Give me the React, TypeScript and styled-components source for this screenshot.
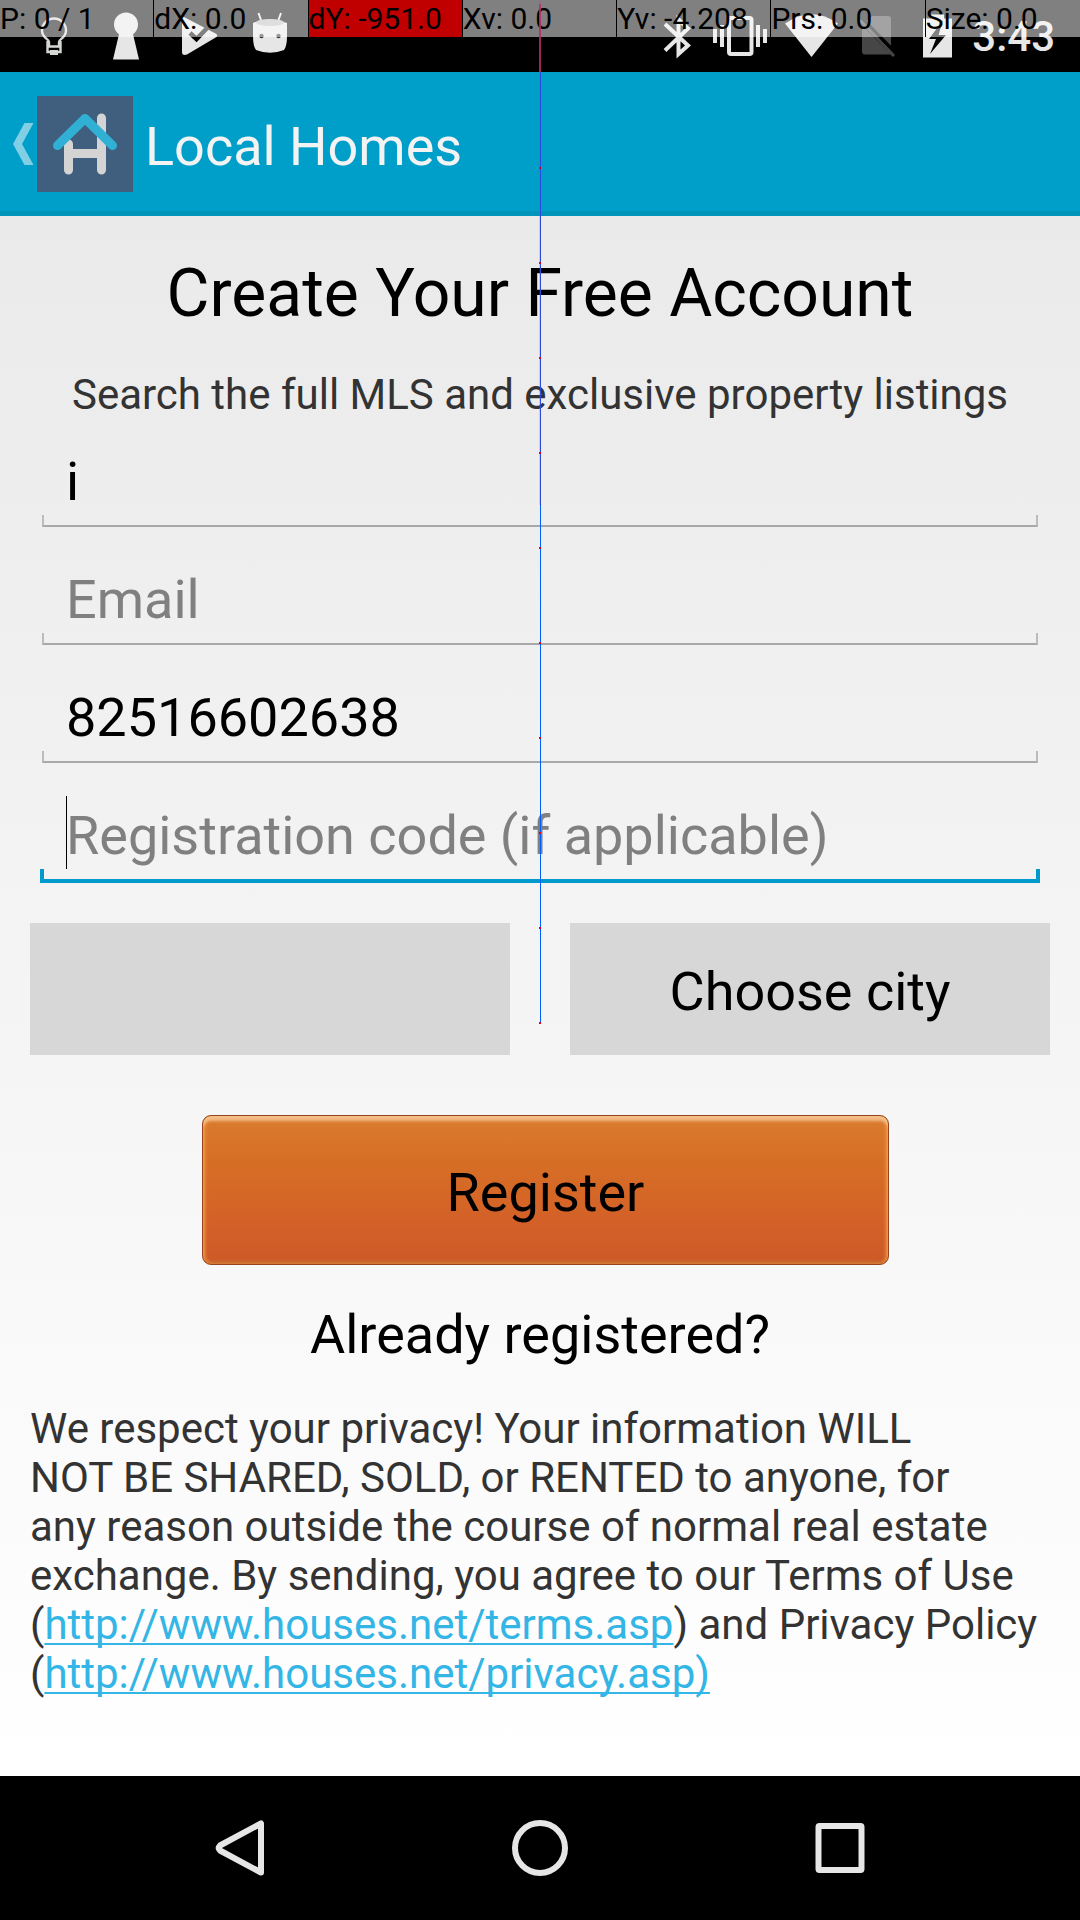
import React from "react";
import styled, { createGlobalStyle } from "styled-components";

const GlobalStyle = createGlobalStyle`
  *, *::before, *::after { box-sizing: border-box; }
  body {
    margin: 0;
    background: #000;
    font-family: Roboto, "Liberation Sans", sans-serif;
  }
  button, input { font-family: inherit; }
`;

const Screen = styled.div`
  position: relative;
  display: flex;
  flex-direction: column;
  min-height: 100vh;
  overflow-x: hidden;
`;

const StatusBar = styled.header`
  display: flex;
  justify-content: space-between;
  height: 72px;
  padding: 0 25px 0 18px;
  background: #000;
  color: #e6e6e6;
`;

const StatusGroup = styled.div`
  display: flex;
  align-items: center;
`;

const StatusIcon = styled.svg<{ $width: number }>`
  display: block;
  flex: none;
  width: ${(p) => p.$width}px;
  height: 72px;
`;

const Clock = styled.time`
  font-size: 42px;
  font-weight: 500;
  line-height: 50px;
  padding-top: 2px;
  margin-left: 4px;
`;

const PointerReadout = styled.div`
  position: absolute;
  top: 0;
  left: 0;
  right: 0;
  display: grid;
  grid-template-columns: repeat(7, 1fr);
  height: 37px;
`;

const ReadoutCell = styled.span<{ $alert?: boolean }>`
  border-right: 1px solid #000;
  background: ${(p) => (p.$alert ? "#c00000" : "rgba(255, 255, 255, 0.5)")};
  background-clip: padding-box;
  color: #000;
  font-size: 30px;
  line-height: 37px;
  white-space: nowrap;

  &:last-child {
    border-right: 0;
  }
`;

const PointerTrace = styled.svg`
  position: absolute;
  top: 0;
  left: 50%;
  width: 4px;
  height: 1024px;
  margin-left: -2px;
  pointer-events: none;
`;

const ActionBar = styled.div`
  display: flex;
  align-items: center;
  height: 144px;
  background: #009fc9;
  box-shadow: inset 0 -5px 0 #0094bb;
`;

const UpButton = styled.button`
  display: flex;
  align-items: center;
  padding: 0;
  border: 0;
  background: none;
`;

const AppTitle = styled.span`
  padding: 5px 0 0 12px;
  color: #f3f3f3;
  font-size: 54px;
  line-height: 64px;
`;

const Content = styled.main`
  flex: 1;
  display: flex;
  flex-direction: column;
  gap: 38px;
  padding: 39px 30px 76px;
  background: linear-gradient(#eaeaea, #ffffff);
`;

const Heading = styled.h1`
  margin: 0;
  font-size: 66px;
  font-weight: 400;
  line-height: 77px;
  text-align: center;
`;

const Subheading = styled.p`
  margin: 0;
  color: #333;
  font-size: 42px;
  line-height: 49px;
  text-align: center;
`;

const Form = styled.form`
  display: flex;
  flex-direction: column;
`;

const Fields = styled.div`
  margin-top: -38px;
  padding: 0 12px;
`;

const Field = styled.label`
  position: relative;
  display: block;
  height: 118px;
  padding: 31px 24px 0;
`;

/* bracket-shaped line under a text box */
const Underline = styled.span<{ $active?: boolean }>`
  position: absolute;
  left: ${(p) => (p.$active ? -2 : 0)}px;
  right: ${(p) => (p.$active ? -2 : 0)}px;
  bottom: ${(p) => (p.$active ? 8 : 10)}px;
  height: ${(p) => (p.$active ? 14 : 12)}px;
  border: solid ${(p) => (p.$active ? "#0099cc" : "#bcbcbc")};
  border-width: ${(p) => (p.$active ? "0 4px 4px" : "0 2px 2px")};
  border-bottom-color: ${(p) => (p.$active ? "#0099cc" : "#a8a8a8")};
  pointer-events: none;
`;

const TextInput = styled.input`
  display: block;
  width: 100%;
  height: 64px;
  padding: 0;
  border: 0;
  outline: 0;
  background: none;
  color: #000;
  font-size: 54px;
  line-height: 64px;

  &::placeholder {
    color: #808080;
    opacity: 1;
  }
`;

const Caret = styled.i`
  position: absolute;
  top: 23px;
  left: 24px;
  width: 1px;
  height: 73px;
  background: #000;
`;

const Choices = styled.div`
  display: grid;
  grid-template-columns: 1fr 1fr;
  gap: 60px;
  margin-top: 32px;
`;

const ChoiceButton = styled.button`
  height: 132px;
  padding: 5px 0 0;
  border: 0;
  background: #d7d7d7;
  color: #000;
  font-size: 54px;
`;

const RegisterButton = styled.button`
  height: 150px;
  margin: 60px 161px 0 172px;
  padding: 5px 0 0;
  border: 1px solid #98431f;
  border-radius: 9px;
  background: linear-gradient(#da7c30, #d66f25 30%, #d46128 70%, #cd5927);
  box-shadow:
    inset 0 5px 3px rgba(255, 222, 180, 0.65),
    inset 3px 0 3px rgba(240, 150, 55, 0.6),
    inset -3px 0 3px rgba(240, 150, 55, 0.6),
    inset 0 -3px 3px rgba(190, 120, 60, 0.6);
  color: #000;
  font-size: 54px;
`;

const SignInLink = styled.a`
  align-self: center;
  color: #000;
  font-size: 54px;
  line-height: 63px;
  text-decoration: none;
`;

const Privacy = styled.p`
  margin: 0;
  color: #333;
  font-size: 42px;
  line-height: 49px;

  a {
    color: #33b5e5;
    text-decoration-thickness: 2px;
    text-underline-offset: 4px;
    text-decoration-skip-ink: none;
  }
`;

const NavBar = styled.nav`
  display: grid;
  grid-template-columns: repeat(3, 300px);
  justify-content: center;
  height: 144px;
  background: #000;
`;

const NavButton = styled.button`
  display: grid;
  place-items: center;
  padding: 0;
  border: 0;
  background: none;
`;

const READOUTS = [
  { text: "P: 0 / 1" },
  { text: "dX: 0.0" },
  { text: "dY: -951.0", alert: true },
  { text: "Xv: 0.0" },
  { text: "Yv: -4.208" },
  { text: "Prs: 0.0" },
  { text: "Size: 0.0" },
];

const TRACE_POINTS = [168, 263, 358, 453, 548, 643, 738, 833, 928, 1023];

const FIELDS = [
  { label: "Name", value: "i" },
  { label: "Email", value: "" },
  { label: "Phone", value: "82516602638" },
  { label: "Registration code (if applicable)", value: "", active: true },
];

function NotificationIcons() {
  return (
    <StatusGroup>
      <StatusIcon $width={72} viewBox="0 0 72 72">
        <path
          d="M31 47 V42 C31 39 24 38 24 30.500 A12 12 0 0 1 48 30.500 C48 38 41 39 41 42 V47"
          fill="none"
          stroke="#d4d8d4"
          strokeWidth="2.400"
        />
        <path d="M29.500 41 V52 H42.500 V41 M30 46.500 H42" fill="none" stroke="#d4d8d4" strokeWidth="2.400" />
        <path d="M32 50 H40 V55 H32 Z" fill="#d4d8d4" />
      </StatusIcon>
      <StatusIcon $width={72} viewBox="0 0 72 72">
        <circle cx="36" cy="24.500" r="12" fill="#e6e6e6" />
        <path d="M29.500 32 H42.500 L49 59.500 H23 Z" fill="#e6e6e6" />
      </StatusIcon>
      <StatusIcon $width={72} viewBox="0 0 72 72">
        <path
          d="M21 16.500 L54.500 34 Q56 35.500 54.500 37 L25 54.500 Q20 56 20 52 V18 Q20 16.500 21 16.500 Z"
          fill="#e6e6e6"
        />
        <path d="M28 33 L34.500 39 L49 24" fill="none" stroke="#000" strokeWidth="4.500" />
      </StatusIcon>
      <StatusIcon $width={72} viewBox="0 0 72 72">
        <path d="M27 20 L24.500 13 M44.500 20 L47 13" stroke="#e6e6e6" strokeWidth="2" />
        <path d="M19 23 Q36 16 53 23 V36 Q53 46 50 50 Q36 55.500 22 50 Q19 46 19 36 Z" fill="#e6e6e6" />
        <ellipse cx="36" cy="22.500" rx="14" ry="3.500" fill="#bdbdbd" />
        <circle cx="27.500" cy="36" r="2.200" fill="#333" />
        <circle cx="44.500" cy="36" r="2.200" fill="#333" />
      </StatusIcon>
    </StatusGroup>
  );
}

function SystemIcons() {
  return (
    <StatusGroup>
      <StatusIcon $width={62} viewBox="646 0 62 72">
        <path
          d="M665 24 L688 45.500 L678.500 54 V19.500 L688 28.500 L665 50.500"
          fill="none"
          stroke="#e6e6e6"
          strokeWidth="4"
        />
      </StatusIcon>
      <StatusIcon $width={68} viewBox="708 0 68 72">
        <rect x="729" y="18" width="22.500" height="36" rx="2" fill="none" stroke="#e6e6e6" strokeWidth="4" />
        <path
          d="M715 29 V43 M722 25 V47 M758 25 V47 M765 29 V43"
          stroke="#e6e6e6"
          strokeWidth="4"
        />
      </StatusIcon>
      <StatusIcon $width={72} viewBox="776 0 72 72">
        <path d="M811.500 57 L785 23.500 Q811.500 5 838 23.500 Z" fill="#e6e6e6" />
      </StatusIcon>
      <StatusIcon $width={60} viewBox="848 0 60 72">
        <path d="M872 16 H888 Q891 16 891 19 V49 L865 23 Z" fill="#464646" />
        <path d="M862 25 L891 54.500 H865 Q862 54.500 862 51.500 Z" fill="#464646" />
        <path d="M860 20 L894 56" stroke="#464646" strokeWidth="3" />
        <path d="M862 18 L895 52" stroke="#000" strokeWidth="3" />
      </StatusIcon>
      <StatusIcon $width={60} viewBox="908 0 60 72">
        <path d="M923 18.500 H931 V14.500 H944 V18.500 H952 V57.500 H923 Z" fill="#e6e6e6" />
        <path d="M943 20 L929 39 H936 L930 54 L946 35 H938.500 Z" fill="#000" />
      </StatusIcon>
      <Clock>3:43</Clock>
    </StatusGroup>
  );
}

function Trace() {
  return (
    <PointerTrace viewBox="0 0 4 1024" shapeRendering="crispEdges" aria-hidden="true">
      <rect x="1" y="0" width="2" height="505" fill="#c832a0" opacity="0.22" />
      <rect x="2" y="72" width="1" height="433" fill="#2c49dc" />
      <rect x="2" y="505" width="1" height="518" fill="#005eff" />
      <rect x="1" y="4" width="2" height="68" fill="#b62c66" opacity="0.8" />
      {TRACE_POINTS.map((y) => (
        <rect key={y} x="1" y={y - 1} width="2" height="2" fill="#e00020" />
      ))}
    </PointerTrace>
  );
}

export default function App() {
  return (
    <>
      <GlobalStyle />
      <Screen>
        <StatusBar>
          <NotificationIcons />
          <SystemIcons />
        </StatusBar>

        <ActionBar>
          <UpButton type="button" aria-label="Navigate up">
            <svg width="37" height="96" viewBox="0 0 37 96">
              <path d="M24.500 27 H33.500 L22 48 L33.500 69 H24.500 L13 48 Z" fill="#80cfe4" />
            </svg>
            <svg width="96" height="96" viewBox="0 0 96 96">
              <rect width="96" height="96" fill="#405e7d" />
              <g fill="none" strokeWidth="9" strokeLinecap="round">
                <path d="M31.500 48 V74 M64.500 22 V74 M31.500 57.500 H64.500" stroke="#d4d4d4" />
                <path d="M20.500 49.500 L48 22.500 L75.500 49.500" stroke="#30b0d4" strokeLinejoin="round" />
              </g>
            </svg>
          </UpButton>
          <AppTitle>Local Homes</AppTitle>
        </ActionBar>

        <Content>
          <Heading>Create Your Free Account</Heading>
          <Subheading>Search the full MLS and exclusive property listings</Subheading>
          <Form onSubmit={(e) => e.preventDefault()}>
            <Fields>
              {FIELDS.map((f) => (
                <Field key={f.label}>
                  <TextInput
                    type="text"
                    aria-label={f.label}
                    placeholder={f.label}
                    defaultValue={f.value}
                  />
                  {f.active && <Caret />}
                  <Underline $active={f.active} />
                </Field>
              ))}
            </Fields>
            <Choices>
              <ChoiceButton type="button" aria-label="Choose state" />
              <ChoiceButton type="button">Choose city</ChoiceButton>
            </Choices>
            <RegisterButton type="submit">Register</RegisterButton>
          </Form>
          <SignInLink href="#sign-in">Already registered?</SignInLink>
          <Privacy>
            We respect your privacy! Your information WILL
            <br />
            NOT BE SHARED, SOLD, or RENTED to anyone, for
            <br />
            any reason outside the course of normal real estate
            <br />
            exchange. By sending, you agree to our Terms of Use
            <br />
            (<a href="http://www.houses.net/terms.asp">http://www.houses.net/terms.asp</a>) and Privacy Policy
            <br />
            (<a href="http://www.houses.net/privacy.asp">http://www.houses.net/privacy.asp)</a>
          </Privacy>
        </Content>

        <NavBar>
          <NavButton type="button" aria-label="Back">
            <svg width="72" height="72" viewBox="0 0 72 72">
              <path
                d="M57 11.500 V60.500 L16 38.500 Q13.500 36 16 33.500 Z"
                fill="none"
                stroke="#e6e6e6"
                strokeWidth="6"
                strokeLinejoin="round"
              />
            </svg>
          </NavButton>
          <NavButton type="button" aria-label="Home">
            <svg width="72" height="72" viewBox="0 0 72 72">
              <circle cx="36" cy="36" r="25" fill="none" stroke="#e6e6e6" strokeWidth="6" />
            </svg>
          </NavButton>
          <NavButton type="button" aria-label="Recent apps">
            <svg width="72" height="72" viewBox="0 0 72 72">
              <rect
                x="14.500"
                y="14"
                width="43"
                height="44"
                rx="1"
                fill="none"
                stroke="#e6e6e6"
                strokeWidth="6"
                strokeLinejoin="round"
              />
            </svg>
          </NavButton>
        </NavBar>

        <PointerReadout>
          {READOUTS.map((r) => (
            <ReadoutCell key={r.text} $alert={r.alert}>
              {r.text}
            </ReadoutCell>
          ))}
        </PointerReadout>
        <Trace />
      </Screen>
    </>
  );
}
